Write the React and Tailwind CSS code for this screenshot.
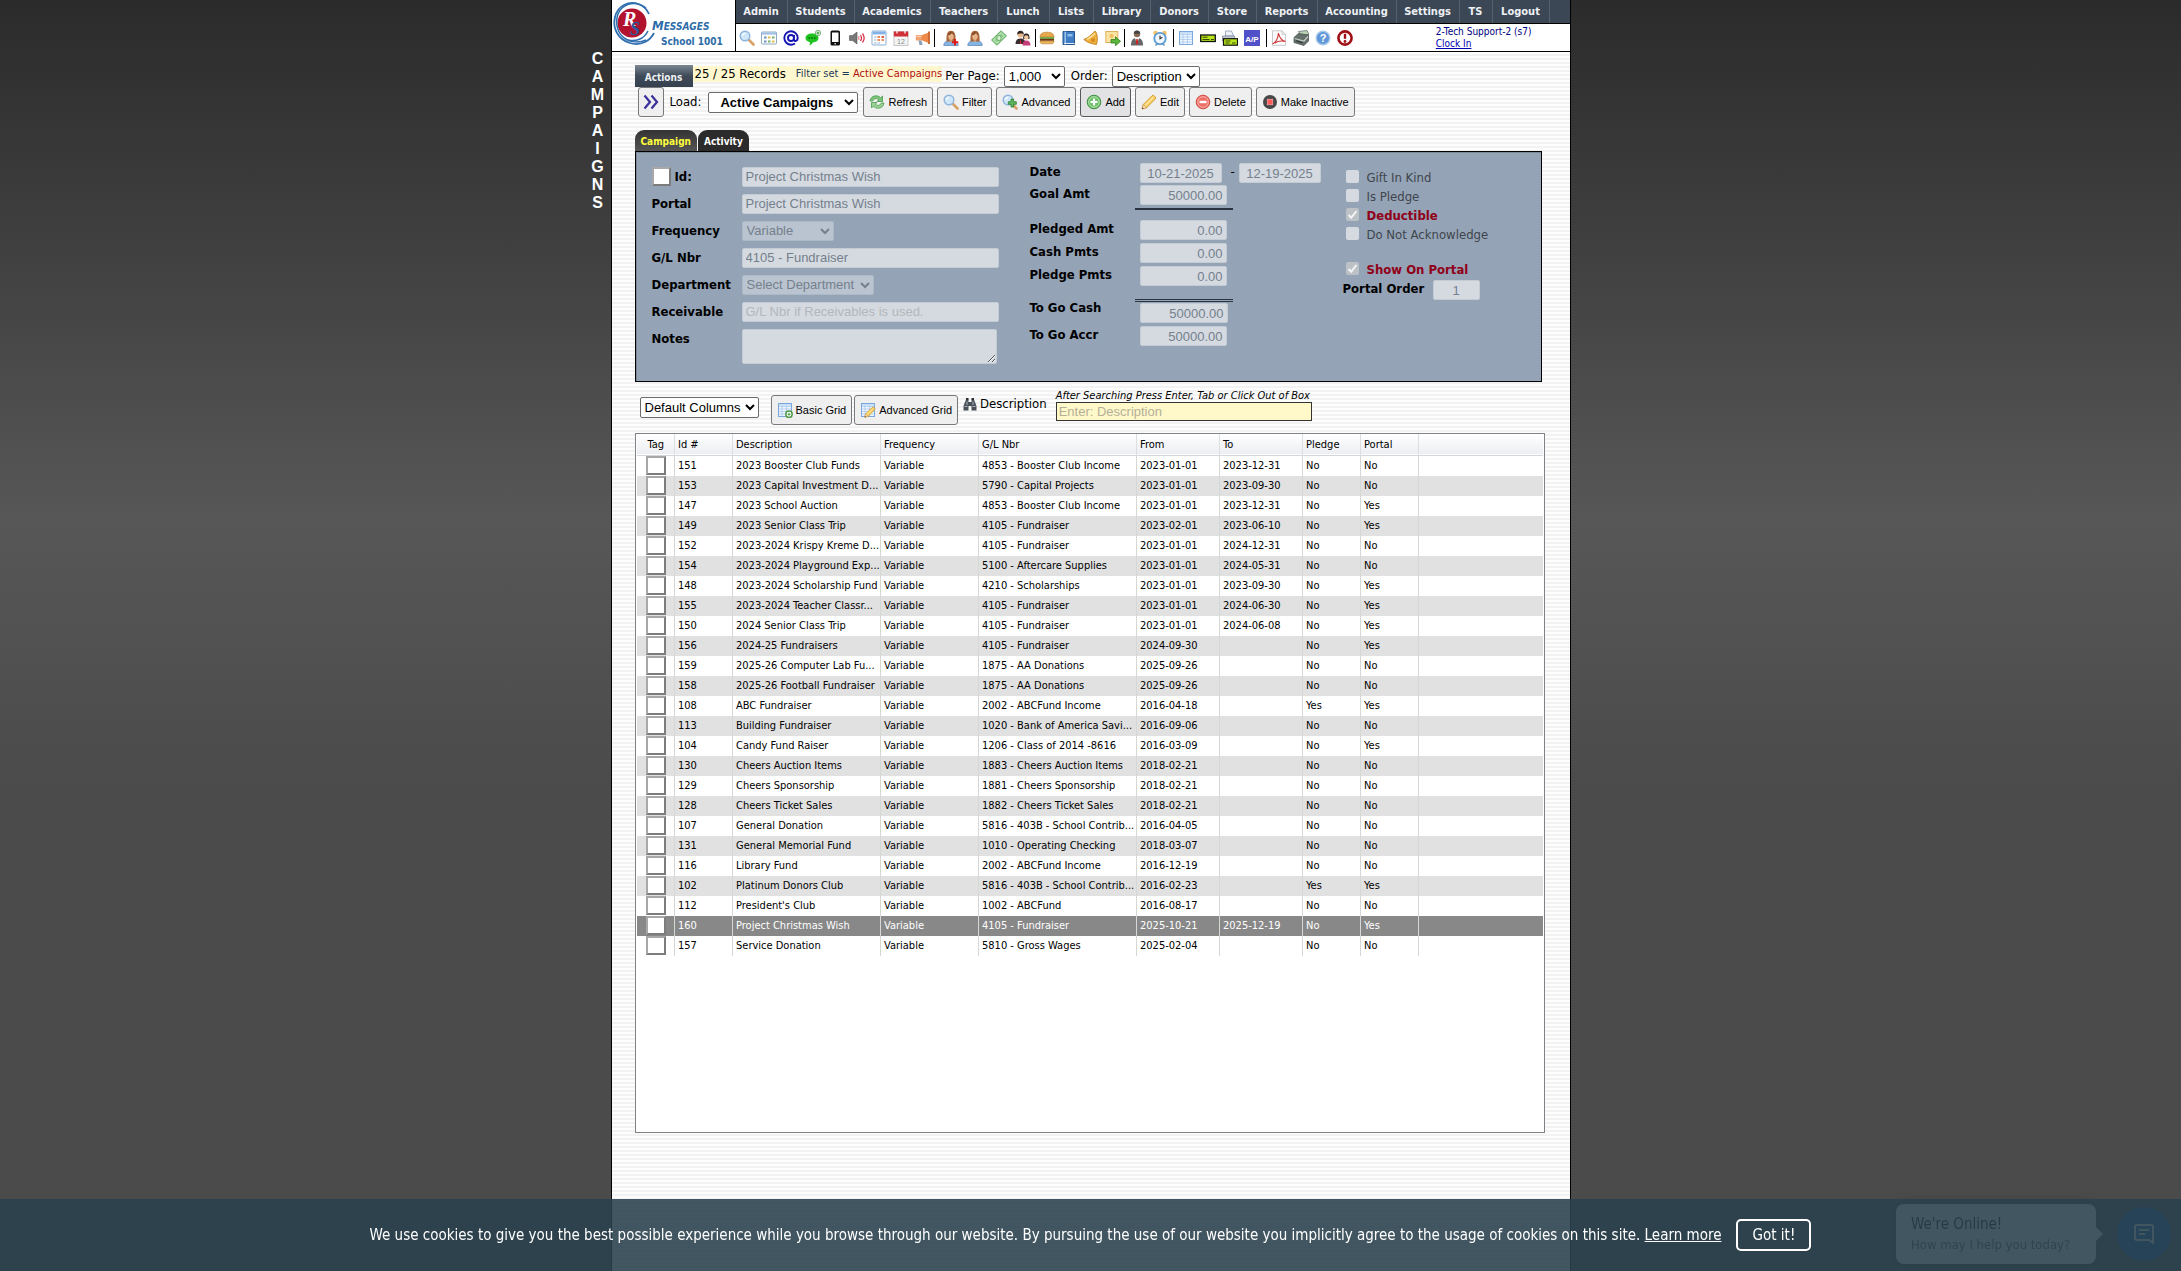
import React, { useState } from 'react';

const menu = [
  { name: 'Admin', width: 'w-[52px]' },
  { name: 'Students', width: 'w-[67px]' },
  { name: 'Academics', width: 'w-[76px]' },
  { name: 'Teachers', width: 'w-[67px]' },
  { name: 'Lunch', width: 'w-[52px]' },
  { name: 'Lists', width: 'w-[44px]' },
  { name: 'Library', width: 'w-[57px]' },
  { name: 'Donors', width: 'w-[58px]' },
  { name: 'Store', width: 'w-[48px]' },
  { name: 'Reports', width: 'w-[61px]' },
  { name: 'Accounting', width: 'w-[79px]' },
  { name: 'Settings', width: 'w-[63px]' },
  { name: 'TS', width: 'w-[33px]' },
  { name: 'Logout', width: 'w-[57px]' },
];

const campaigns = [
  ['151', '2023 Booster Club Funds', '4853 - Booster Club Income', '2023-01-01', '2023-12-31', 'No', 'No'],
  ['153', '2023 Capital Investment D...', '5790 - Capital Projects', '2023-01-01', '2023-09-30', 'No', 'No'],
  ['147', '2023 School Auction', '4853 - Booster Club Income', '2023-01-01', '2023-12-31', 'No', 'Yes'],
  ['149', '2023 Senior Class Trip', '4105 - Fundraiser', '2023-02-01', '2023-06-10', 'No', 'Yes'],
  ['152', '2023-2024 Krispy Kreme D...', '4105 - Fundraiser', '2023-01-01', '2024-12-31', 'No', 'No'],
  ['154', '2023-2024 Playground Exp...', '5100 - Aftercare Supplies', '2023-01-01', '2024-05-31', 'No', 'No'],
  ['148', '2023-2024 Scholarship Fund', '4210 - Scholarships', '2023-01-01', '2023-09-30', 'No', 'Yes'],
  ['155', '2023-2024 Teacher Classr...', '4105 - Fundraiser', '2023-01-01', '2024-06-30', 'No', 'Yes'],
  ['150', '2024 Senior Class Trip', '4105 - Fundraiser', '2023-01-01', '2024-06-08', 'No', 'Yes'],
  ['156', '2024-25 Fundraisers', '4105 - Fundraiser', '2024-09-30', '', 'No', 'Yes'],
  ['159', '2025-26 Computer Lab Fu...', '1875 - AA Donations', '2025-09-26', '', 'No', 'No'],
  ['158', '2025-26 Football Fundraiser', '1875 - AA Donations', '2025-09-26', '', 'No', 'No'],
  ['108', 'ABC Fundraiser', '2002 - ABCFund Income', '2016-04-18', '', 'Yes', 'Yes'],
  ['113', 'Building Fundraiser', '1020 - Bank of America Savi...', '2016-09-06', '', 'No', 'No'],
  ['104', 'Candy Fund Raiser', '1206 - Class of 2014 -8616', '2016-03-09', '', 'No', 'Yes'],
  ['130', 'Cheers Auction Items', '1883 - Cheers Auction Items', '2018-02-21', '', 'No', 'No'],
  ['129', 'Cheers Sponsorship', '1881 - Cheers Sponsorship', '2018-02-21', '', 'No', 'No'],
  ['128', 'Cheers Ticket Sales', '1882 - Cheers Ticket Sales', '2018-02-21', '', 'No', 'No'],
  ['107', 'General Donation', '5816 - 403B - School Contrib...', '2016-04-05', '', 'No', 'No'],
  ['131', 'General Memorial Fund', '1010 - Operating Checking', '2018-03-07', '', 'No', 'No'],
  ['116', 'Library Fund', '2002 - ABCFund Income', '2016-12-19', '', 'No', 'No'],
  ['102', 'Platinum Donors Club', '5816 - 403B - School Contrib...', '2016-02-23', '', 'Yes', 'Yes'],
  ['112', "President's Club", '1002 - ABCFund', '2016-08-17', '', 'No', 'No'],
  ['160', 'Project Christmas Wish', '4105 - Fundraiser', '2025-10-21', '2025-12-19', 'No', 'Yes'],
  ['157', 'Service Donation', '5810 - Gross Wages', '2025-02-04', '', 'No', 'No'],
];

const Svg = ({ children }) => (
  <svg width="16" height="16" viewBox="0 0 16 16" fill="none" className="shrink-0" aria-hidden="true">
    {children}
  </svg>
);

// Shared pieces of the small drawings
const glass = (
  <>
    <path d="M9.5 9.5l5 5" stroke="#d9a066" strokeWidth="2.6" strokeLinecap="round" />
    <circle cx="6" cy="6" r="4.8" fill="#cfe6fa" stroke="#8fb4dc" strokeWidth="1.4" />
    <path d="M3.5 6a2.6 2.6 0 012.6-2.6" stroke="#fff" strokeWidth="1.2" />
  </>
);

const sheet = (
  <>
    <rect x="1.5" y="1.5" width="13" height="13" fill="#eef6ff" stroke="#7aa7dc" />
    <path d="M2 4.5h12M2 7h12M2 9.5h12M2 12h12M5 2v12M9.5 2v12" stroke="#a9c9ec" strokeWidth=".8" />
    <path d="M2 2.8h12" stroke="#c4dcf6" strokeWidth="1.6" />
  </>
);

const pencil = (
  <>
    <path d="M1 15l1.3-4.6L11 1.7a1.4 1.4 0 012 0l1.3 1.3a1.4 1.4 0 010 2L5.6 13.7z" fill="#f8cf5c" stroke="#c98f2a" strokeWidth=".8" />
    <path d="M3.8 11.8l8.4-8.4" stroke="#fdebb0" strokeWidth="1.2" />
    <path d="M1 15l1.3-4.6 3.3 3.3z" fill="#f6dfc0" stroke="#c98f2a" strokeWidth=".6" />
    <path d="M1 15l.5-1.8 1.3 1.3z" fill="#444" />
  </>
);

const lady = (
  <>
    <path d="M.8 15.500c0-3.400 2.400-5 7.200-5s7.200 1.600 7.200 5z" fill="#86b4e0" stroke="#5580b8" strokeWidth=".7" />
    <path d="M3.500 11.500C3 4 4.500.8 8 .8S13 4 12.500 11.500z" fill="#a9673a" />
    <ellipse cx="8" cy="6.500" rx="2.700" ry="3.400" fill="#e8b48a" />
    <path d="M5.200 5.200C7 5 8.500 4 9 3c.5 1 1.200 1.800 2 2.200V3.500L8 1.500 5 3.500z" fill="#8a4e28" />
    <path d="M6.500 10.500L8 12l1.500-1.500z" fill="#f1c29a" />
  </>
);

const icons = {
  search: glass,
  grid: (
    <>
      <rect x=".5" y="2" width="15" height="12" rx="1" fill="#fff" stroke="#8ea9c4" />
      <path d="M1 3.500h14" stroke="#9fc0e4" strokeWidth="2.200" />
      <path d="M3 6.500h2.500v2H3zM3 10.500h2.500v2H3z" fill="#6c93bd" />
      <path d="M7 6.500h2.500v2H7zM11 10.500h2.500v2H11z" fill="#e1c14a" />
      <path d="M11 6.500h2.500v2H11zM7 10.500h2.500v2H7z" fill="#7db074" />
    </>
  ),
  at: (
    <path d="M11 5v4.200c0 2.700 3.700 2.300 3.700-1.500A6.700 6.700 0 108 14.700c1.600 0 2.800-.4 4-1.200M11 8a3 3 0 11-6 0 3 3 0 016 0z" stroke="#1414b4" strokeWidth="1.900" />
  ),
  chat: (
    <>
      <path d="M7 3.500c3.800 0 6.500 1.900 6.500 4.500S10.800 12.400 7.800 12.400c-.5 1.400-2 2.600-3.600 2.800.7-.9.8-2 .6-3C2.400 11.600.5 10.200.5 8 .5 5.400 3.200 3.500 7 3.500z" fill="#1fc21f" />
      <path d="M3.500 8h1.600M6.300 8h1.600M9 8h1.600" stroke="#0b6a0b" strokeWidth="1.600" />
      <circle cx="13" cy="3" r="2.700" fill="#f0fff0" stroke="#4c9a4c" strokeWidth=".7" />
      <path d="M13 1.500v3M11.500 3h3" stroke="#2a8a2a" />
    </>
  ),
  phone: (
    <>
      <rect x="3.500" y=".5" width="9.500" height="15" rx="1.600" fill="#111" />
      <rect x="5" y="2.500" width="6.500" height="9.500" fill="#fff" />
      <circle cx="8.200" cy="13.800" r=".8" fill="#fff" />
    </>
  ),
  sound: (
    <>
      <path d="M.5 5.500h3L8 2v12l-4.500-3.500h-3z" fill="#777" stroke="#555" strokeWidth=".6" />
      <path d="M9.800 6v4" stroke="#e88" strokeWidth="1.200" />
      <path d="M11.500 5c1.200 1.800 1.200 4.200 0 6M13.500 3.500c2 2.700 2 6.300 0 9" stroke="#d8344a" strokeWidth="1.300" />
    </>
  ),
  sheetCal: (
    <>
      <rect x="1" y="1" width="14" height="14" rx="1" fill="#fff" stroke="#88add6" />
      <path d="M1.500 3h13" stroke="#84b0e6" strokeWidth="2.800" />
      <path d="M3 6h2.500v2H3zM3 9h2.500v2H3zM3 12h2.500v2H3zM6.500 12H9v2H6.500z" fill="#c9d8e8" />
      <path d="M6.500 6H9v2H6.500zM6.500 9H9v2H6.500zM10.500 9H13v2h-2.500z" fill="#e98a5a" />
      <path d="M10.500 6H13v2h-2.500z" fill="#d9603a" />
    </>
  ),
  calendar: (
    <>
      <rect x="1" y="1.500" width="14" height="14" fill="#f4f4f4" stroke="#bbb" strokeWidth=".8" />
      <path d="M.8 1.500h14.400v5H.8z" fill="#cf2f36" />
      <path d="M4 .5v3M12 .5v3" stroke="#fff" strokeWidth="1.200" />
      <text x="8" y="13.500" fontSize="7" textAnchor="middle" fill="#888" fontFamily="Liberation Sans, sans-serif">12</text>
    </>
  ),
  horn: (
    <>
      <path d="M13.500 2.500v10.500L6 10V5.500z" fill="#f08a48" />
      <path d="M14 1.500v12.500" stroke="#c8602a" strokeWidth="1.800" />
      <path d="M.8 5h5.700v5.500H.8z" fill="#f5a070" />
      <path d="M1.500 6.500h5" stroke="#fbd0b4" strokeWidth="1.200" />
      <path d="M3.500 10.500h3l1.200 4.500H4.500z" fill="#8aa0bb" />
    </>
  ),
  ladyAdd: (
    <>
      {lady}
      <path d="M12 9v6.500M8.800 12.200h6.500" stroke="#e01818" strokeWidth="2" />
    </>
  ),
  lady,
  money: (
    <>
      <path d="M.5 10L10 .8l5.500 5L6 15.200z" fill="#8fce8b" stroke="#4e9a52" strokeWidth=".8" />
      <path d="M2.500 10L10 2.800l3.500 3L6 13z" stroke="#d8f2d2" strokeWidth=".8" />
      <ellipse cx="8" cy="8" rx="2.200" ry="2.600" fill="#d6f0cf" stroke="#4e9a52" strokeWidth=".7" />
    </>
  ),
  people: (
    <>
      <circle cx="5.500" cy="4.500" r="3" fill="#e9b78c" />
      <path d="M2.300 4.800C2 1.500 4 .8 5.500.8S9 1.500 8.700 4.800C8 3 3.500 3 2.300 4.800z" fill="#2c2020" />
      <path d="M.5 14c0-4 2-5.500 5-5.500s5 1.500 5 5.500z" fill="#3a2c34" />
      <path d="M5.500 8.500L4.800 14h1.600z" fill="#d22" />
      <path d="M8.200 9C8 4.500 9.500 3.500 11.300 3.500S14.700 4.500 14.500 9z" fill="#2c2020" />
      <circle cx="11.300" cy="7.500" r="2.300" fill="#f1c8a0" />
      <path d="M7.500 15.500c0-3.500 1.500-5 3.900-5s4.100 1.500 4.100 5z" fill="#c63b78" />
    </>
  ),
  burger: (
    <>
      <path d="M1 7c0-3.500 3-4.800 7-4.800S15 3.500 15 7z" fill="#e6a94c" stroke="#b9772a" strokeWidth=".6" />
      <path d="M.8 8h14.400" stroke="#5aa02c" strokeWidth="1.600" />
      <path d="M1 9.800h14" stroke="#6a3515" strokeWidth="2" />
      <path d="M1 11h14c0 2-1 2.800-3 2.800H4c-2 0-3-.8-3-2.800z" fill="#eab65e" stroke="#b9772a" strokeWidth=".6" />
    </>
  ),
  book: (
    <>
      <path d="M2 1.500h11.500v13H2z" fill="#3f7ec4" stroke="#24558f" />
      <path d="M4.200 1.500v13" stroke="#b7d3f2" strokeWidth="1.200" />
      <path d="M6.500 4h5v2.500h-5z" fill="#8fbdec" />
      <path d="M3 13.500h10.500" stroke="#e4eef9" />
    </>
  ),
  bell: (
    <>
      <path d="M.8 9.500C5 8 8 5 12 1c2.500 2 3 9 1.500 13.500C9 14 4 12.500.8 9.500z" fill="#f0b13a" stroke="#b9791c" strokeWidth=".8" />
      <path d="M4 9.200C7 8 9.500 6 12 3.500" stroke="#fbe09a" strokeWidth="1.600" />
      <circle cx="10" cy="10" r="2" fill="#d68a26" />
    </>
  ),
  forward: (
    <>
      <rect x=".8" y="1.500" width="12" height="11" fill="#fbe3a2" stroke="#dcb25c" />
      <circle cx="6.500" cy="6" r="2" fill="#f0bd62" />
      <path d="M6 9.500h4.500V6.800l5 4.500-5 4.500V13H6z" fill="#5cb53c" stroke="#2f7d1c" strokeWidth=".8" />
    </>
  ),
  man: (
    <>
      <path d="M2 15.500c0-5 1.500-7.500 6-7.500s6 2.500 6 7.500z" fill="#666" />
      <path d="M6 8h4l-2 6z" fill="#fff" />
      <path d="M7.300 9h1.400l.5 4L8 15l-1.200-2z" fill="#d22020" />
      <circle cx="8" cy="4" r="3.200" fill="#8a6a58" />
      <path d="M4.800 3.800C4.800 1.500 6 .5 8 .5s3.200 1 3.200 3.300z" fill="#444" />
    </>
  ),
  clock: (
    <>
      <circle cx="3.500" cy="3" r="2.200" fill="#f2c062" />
      <circle cx="12.500" cy="3" r="2.200" fill="#f2c062" />
      <path d="M3.500 15.500l2-2M12.500 15.500l-2-2" stroke="#7a93b0" strokeWidth="1.600" />
      <circle cx="8" cy="8.500" r="5.700" fill="#f0f7ff" stroke="#5d9ad6" strokeWidth="1.800" />
      <path d="M8 5.500v3.200l2.400-1.500" stroke="#333" strokeWidth="1.100" />
    </>
  ),
  sheet,
  check: (
    <>
      <rect x=".7" y="5" width="14.600" height="6.500" fill="#b8e61c" stroke="#111" strokeWidth="1.300" />
      <path d="M2.500 7.200h5M2.500 9.500h7M11 9.500h3" stroke="#3b4a08" />
    </>
  ),
  checkPrint: (
    <>
      <path d="M3.500 1h6l2 5h-8z" fill="#eef3fa" stroke="#8b9bb5" strokeWidth=".8" />
      <path d="M.5 6h12v5H.5z" fill="#c3cad6" stroke="#7f8ba0" strokeWidth=".8" />
      <rect x="1.500" y="8.700" width="14" height="6.500" fill="#b8e61c" stroke="#111" strokeWidth="1.200" />
      <path d="M3.500 11h5M3.500 13h4M10 13h3.500" stroke="#3b4a08" />
    </>
  ),
  ap: (
    <>
      <rect width="16" height="16" fill="#5050c8" />
      <text x="8" y="11.500" fontSize="8" fontWeight="bold" textAnchor="middle" fill="#fff" fontFamily="Liberation Sans, sans-serif">A/P</text>
    </>
  ),
  pdf: (
    <>
      <path d="M1.500.8h9.500l3.500 3.500v11h-13z" fill="#fdfdfd" stroke="#bbb" strokeWidth=".8" />
      <path d="M11 .8v3.500h3.500" stroke="#bbb" strokeWidth=".8" />
      <path d="M1.500 14c3-1.500 5.500-5.500 6-11 .8 4.500 2.700 7.500 7 8.500-3.500-.8-8-.5-10.500 1.500" stroke="#cf3a3a" strokeWidth="1.200" />
    </>
  ),
  register: (
    <>
      <path d="M5.500 1.500l8.500-1 2 4-8 1.500z" fill="#bcd4b4" stroke="#566" strokeWidth=".7" />
      <path d="M1 7.500l4.500-4L15.500 5v6l-4.500 4.500L1 12.500z" fill="#66706b" stroke="#3d4643" strokeWidth=".7" />
      <path d="M1.500 8.500l9.500 2.500 4-4.500" stroke="#c4ccc6" strokeWidth="1.200" />
      <path d="M3 10.800l6.500 2" stroke="#2c3330" strokeWidth="1.200" />
    </>
  ),
  help: (
    <>
      <circle cx="8" cy="8" r="6.800" fill="#5f97d8" stroke="#a9c8ec" strokeWidth="1.400" />
      <text x="8" y="12" fontSize="11" fontWeight="bold" textAnchor="middle" fill="#fff" fontFamily="Liberation Sans, sans-serif">?</text>
    </>
  ),
  alert: (
    <>
      <circle cx="8" cy="8" r="6.600" fill="#fff" stroke="#a01016" strokeWidth="2.600" />
      <path d="M8 3.800v5" stroke="#a01016" strokeWidth="2.400" />
      <circle cx="8" cy="11.500" r="1.400" fill="#a01016" />
    </>
  ),
  refresh: (
    <>
      <path d="M1 7C1.500 3.500 4 1.800 7 1.800c2 0 3.500.7 4.700 2L13.500 2v5.500H8L9.800 5.700C8 4 4.500 4.200 3.800 7z" fill="#7cc47a" stroke="#479a4c" strokeWidth=".8" />
      <path d="M15 9c-.5 3.500-3 5.200-6 5.200-2 0-3.500-.7-4.700-2L2.500 14V8.500H8l-1.800 1.800c1.800 1.700 5.300 1.500 6-1.300z" fill="#9bd596" stroke="#479a4c" strokeWidth=".8" />
    </>
  ),
  advanced: (
    <>
      {glass}
      <path d="M9 5h2.600v2.700h2.700v2.600h-2.700V13H9v-2.700H6.300V7.700H9z" fill="#5cb85c" stroke="#2e7d32" strokeWidth=".8" />
    </>
  ),
  add: (
    <>
      <circle cx="8" cy="8" r="6.800" fill="#6fbf68" stroke="#3f8f42" />
      <circle cx="8" cy="8" r="5.300" stroke="#b9e4b2" />
      <path d="M8 4.500v7M4.500 8h7" stroke="#fff" strokeWidth="2.200" />
    </>
  ),
  edit: pencil,
  remove: (
    <>
      <circle cx="8" cy="8" r="6.800" fill="#ee6f66" stroke="#cf4a42" />
      <circle cx="8" cy="8" r="5.300" stroke="#f8b3ac" />
      <path d="M4.500 8h7" stroke="#fff" strokeWidth="2.400" />
    </>
  ),
  inactive: (
    <>
      <circle cx="8" cy="8" r="7" fill="#474747" />
      <rect x="5.200" y="5.200" width="5.600" height="5.600" fill="#ff5a5a" stroke="#ffb3b3" strokeWidth=".6" />
    </>
  ),
  basicGrid: (
    <>
      {sheet}
      <circle cx="12" cy="12.300" r="3.200" fill="#fff" stroke="#4f9a45" strokeWidth="1.500" />
      <path d="M12 10.800v3M10.500 12.300h3" stroke="#4f9a45" />
    </>
  ),
  advancedGrid: (
    <>
      {sheet}
      <g transform="translate(4 4) scale(.75)">{pencil}</g>
    </>
  ),
  chevrons: <path d="M1.500 1.500L7 8l-5.500 6.500M8.500 1.500L14 8l-5.500 6.500" stroke="#3a2f9a" strokeWidth="2.200" />,
  binoculars: (
    <>
      <path d="M4 3.500h2.500v2.500h3V3.500H12l2.500 6.500v4.500h-5V10h-3v4.500h-5V10z" fill="#4a5058" />
      <path d="M4 2h2.500v2H4zM9.500 2H12v2H9.500z" fill="#2c3036" />
      <path d="M2.500 10.500h3M10.500 10.500h3M5 5.500v3.500M11 5.500v3.500" stroke="#aab4c0" />
    </>
  ),
};

const toolGroups = [
  { slot: 'w-[22px]', box: '', names: ['search', 'grid', 'at', 'chat', 'phone', 'sound', 'sheetCal', 'calendar', 'horn'] },
  { slot: 'w-[24px]', box: 'pl-1', names: ['ladyAdd', 'lady', 'money', 'people'] },
  { slot: 'w-[22px]', box: '', names: ['burger', 'book', 'bell', 'forward'] },
  { slot: 'w-[23px]', box: 'px-px', names: ['man', 'clock'] },
  { slot: 'w-[22px]', box: 'pl-px pr-[3px]', names: ['sheet', 'check', 'checkPrint', 'ap'] },
  { slot: 'w-[22px]', box: 'pl-px', names: ['pdf', 'register', 'help', 'alert'] },
];

const ToolButton = ({ icon, children, active }) => (
  <button
    type="button"
    className={`flex h-[30px] items-center gap-[3px] rounded-[3px] border px-[5px] font-['Liberation_Sans',sans-serif] text-[11px] whitespace-nowrap text-black ${
      active ? 'border-[#55585c] bg-[#e2e2e4]' : 'border-[#77797c] bg-[#efefef]'
    }`}
  >
    <Svg>{icons[icon]}</Svg>
    {children}
  </button>
);

const field =
  "h-[20px] rounded-[2px] border border-[#c3cbd5] bg-[#d5dae1] px-[3px] font-['Liberation_Sans',sans-serif] text-[13px] text-[#74808c]";
const dropDown =
  "h-[21px] rounded-[2px] border border-[#6b6b6b] bg-white font-['Liberation_Sans',sans-serif] text-[13px] text-black";
const mutedDropDown =
  "h-[20px] rounded-[2px] border border-[#aeb9c6] bg-[#bac4d0] font-['Liberation_Sans',sans-serif] text-[13px] text-[#74808c]";
const tagBox =
  'block appearance-none border-2 border-t-[#a8a8a8] border-l-[#a8a8a8] border-r-[#7c7c7c] border-b-[#7c7c7c] bg-white';

const Logo = () => (
  <a href="#home" className="flex h-[51px] w-[124px] shrink-0 border-r border-black bg-white">
    <svg width="123" height="51" viewBox="0 0 123 51" fill="none" role="img" aria-label="RS Messages School 1001">
      <circle cx="20" cy="23" r="14.500" fill="#b3122f" />
      <path d="M37 14C33 5 22 0 12 5 2 10 0 24 5 33c5 9 18 14 28 9 4-2 7-5 9-9" stroke="#2f6fb0" strokeWidth="1.800" />
      <path d="M34 8C27 2 17 2 10 8 3 15 3 27 9 35c6 7 17 9 25 5" stroke="#2f6fb0" strokeWidth="1.500" />
      <path d="M36 31c-4 8-12 11-20 9" stroke="#2f6fb0" strokeWidth="1.600" />
      <text x="11" y="26" fontSize="20" fontWeight="bold" fontStyle="italic" fill="#fff" fontFamily="Liberation Serif, serif">
        R<tspan x="18" y="35" fontSize="18" fill="#2a5a9c">S</tspan>
      </text>
      <text x="40" y="30" fontWeight="bold" fontStyle="italic" fill="#2d6ca8" fontFamily="DejaVu Sans Condensed, sans-serif">
        <tspan fontSize="13">M</tspan>
        <tspan fontSize="10">ESSAGES</tspan>
      </text>
      <text x="49" y="45" fontSize="10" fontWeight="bold" fill="#2d6ca8" fontFamily="DejaVu Sans Condensed, sans-serif">School 1001</text>
    </svg>
  </a>
);

const Header = () => (
  <header className="flex border-b border-black bg-white">
    <Logo />
    <div className="min-w-0 flex-1">
      <nav className="flex h-6 border-b border-black bg-[#3b4754]">
        {menu.map((item) => (
          <a
            key={item.name}
            href={`#${item.name.toLowerCase()}`}
            className={`flex ${item.width} items-center justify-center border-r border-[#55616d] pt-[2px] text-[11px] font-bold text-[#eef1f4]`}
          >
            {item.name}
          </a>
        ))}
      </nav>
      <div className="flex h-[27px] items-center">
        {toolGroups.map((group, index) => (
          <div key={index} className="flex items-center">
            {index > 0 && <span className="h-[18px] w-px bg-black" />}
            <div className={`flex ${group.box}`}>
              {group.names.map((name) => (
                <button key={name} type="button" aria-label={name} className={`flex ${group.slot} justify-center`}>
                  <Svg>{icons[name]}</Svg>
                </button>
              ))}
            </div>
          </div>
        ))}
        <div className="mr-[38px] ml-auto pt-px text-[10px] leading-3 text-[#000080]">
          <p>2-Tech Support-2 (s7)</p>
          <a href="#clock" className="text-[#0000b0] underline">Clock In</a>
        </div>
      </div>
    </div>
  </header>
);

const Toolbar = () => (
  <section>
    <div className="flex h-[22px] items-center text-[13px]">
      <button type="button" className="h-[22px] w-[58px] bg-linear-to-b from-[#7d8894] via-[#3f4b58] to-[#35414e] pt-[2px] text-[10px] font-bold text-[#eef1f4]">
        Actions
      </button>
      <p className="mb-1 flex h-4 items-center bg-[#fff8cf] pl-[2px] whitespace-nowrap">
        25 / 25 Records
        <span className="ml-[10px] text-[11px] text-[#1d3c58]">
          Filter set = <span className="text-[#b01010]">Active Campaigns</span>
        </span>
      </p>
      <label htmlFor="perPage" className="ml-[3px]">Per Page:</label>
      <select id="perPage" className={`${dropDown} ml-1 w-[61px]`}>
        <option>1,000</option>
      </select>
      <label htmlFor="order" className="ml-[6px]">Order:</label>
      <select id="order" className={`${dropDown} ml-1 w-[88px]`}>
        <option>Description</option>
      </select>
    </div>
    <div className="flex items-center gap-1 pl-[3px] text-[13px]">
      <button type="button" aria-label="Expand" className="flex h-[30px] w-[26px] items-center justify-center rounded-[3px] border border-[#77797c] bg-[#efefef]">
        <Svg>{icons.chevrons}</Svg>
      </button>
      <label htmlFor="load" className="ml-[2px]">Load:</label>
      <select
        id="load"
        className="mr-px ml-[3px] h-[21px] w-[150px] rounded-[2px] border border-[#6b6b6b] bg-white pl-[7px] font-['Liberation_Sans',sans-serif] text-[13px] font-bold text-black"
      >
        <option>Active Campaigns</option>
      </select>
      <ToolButton icon="refresh">Refresh</ToolButton>
      <ToolButton icon="search">Filter</ToolButton>
      <ToolButton icon="advanced">Advanced</ToolButton>
      <ToolButton icon="add" active>Add</ToolButton>
      <ToolButton icon="edit">Edit</ToolButton>
      <ToolButton icon="remove">Delete</ToolButton>
      <ToolButton icon="inactive">Make Inactive</ToolButton>
    </div>
  </section>
);

const Amount = ({ id, label, value }) => (
  <div className="flex h-[23px] items-start">
    <label htmlFor={id} className="w-[110px] font-bold">{label}</label>
    <input id={id} disabled defaultValue={value} className={`${field} w-[87px] text-right`} />
  </div>
);

const Flag = ({ id, label, checked }) => (
  <div className="flex h-[19px] items-center gap-2 pl-[3px]">
    <input
      id={id}
      type="checkbox"
      disabled
      defaultChecked={checked}
      className="peer sr-only"
    />
    <span className="flex size-[13px] items-center justify-center rounded-[2px] bg-[#d5dae1] peer-checked:bg-[#bcc1c6]">
      {checked && (
        <svg width="11" height="11" viewBox="0 0 11 11" fill="none" aria-hidden="true">
          <path d="M1.500 6l2.700 2.700L9.500 2" stroke="#f4f4f4" strokeWidth="2" />
        </svg>
      )}
    </span>
    <label htmlFor={id} className={checked ? 'pt-[2px] font-bold text-[#900018]' : 'pt-[2px] text-[#3f454c]'}>{label}</label>
  </div>
);

const CampaignForm = () => (
  <section className="mr-[3px] flex h-[231px] border border-black bg-[#94a3b6] pt-[11px] pl-4 text-[13px] leading-[18px] shadow-[inset_1px_1px_0_#7d8997]">
    <div className="grid w-[378px] grid-cols-[90px_1fr] auto-rows-[27px] content-start items-center">
      <div className="flex items-center gap-1">
        <input id="tagCurrent" type="checkbox" aria-label="Tag campaign" className={`${tagBox} size-[19px]`} />
        <label htmlFor="campaignId" className="font-bold">Id:</label>
      </div>
      <input id="campaignId" disabled defaultValue="Project Christmas Wish" className={`${field} w-[257px]`} />
      <label htmlFor="portal" className="font-bold">Portal</label>
      <input id="portal" disabled defaultValue="Project Christmas Wish" className={`${field} w-[257px]`} />
      <label htmlFor="frequency" className="font-bold">Frequency</label>
      <select id="frequency" disabled className={`${mutedDropDown} w-[92px]`}>
        <option>Variable</option>
      </select>
      <label htmlFor="glNbr" className="font-bold">G/L Nbr</label>
      <input id="glNbr" disabled defaultValue="4105 - Fundraiser" className={`${field} w-[257px]`} />
      <label htmlFor="department" className="font-bold">Department</label>
      <select id="department" disabled className={`${mutedDropDown} w-[132px]`}>
        <option>Select Department</option>
      </select>
      <label htmlFor="receivable" className="font-bold">Receivable</label>
      <input
        id="receivable"
        disabled
        placeholder="G/L Nbr if Receivables is used."
        className={`${field} w-[257px] placeholder:text-[#b3b6ba]`}
      />
      <label htmlFor="notes" className="font-bold">Notes</label>
      <textarea id="notes" disabled className="mt-1 h-[35px] w-[255px] resize self-start rounded-[2px] border border-[#c3cbd5] bg-[#d5dae1]" />
    </div>

    <div className="w-[313px]">
      <div className="flex h-[22px] items-start">
        <label htmlFor="dateFrom" className="w-[110px] font-bold">Date</label>
        <input id="dateFrom" disabled defaultValue="10-21-2025" className={`${field} w-[82px] text-center`} />
        <span className="w-[17px] pl-[5px] text-center">-</span>
        <input aria-label="Date to" disabled defaultValue="12-19-2025" className={`${field} w-[82px] text-center`} />
      </div>
      <Amount id="goal" label="Goal Amt" value="50000.00" />
      <div className="ml-[105px] h-[2px] w-[98px] bg-[#2a3340]" />
      <div className="pt-[10px]">
        <Amount id="pledged" label="Pledged Amt" value="0.00" />
        <Amount id="cashPmts" label="Cash Pmts" value="0.00" />
        <Amount id="pledgePmts" label="Pledge Pmts" value="0.00" />
      </div>
      <div className="flex h-[27px] items-start pt-[10px] pb-[27px]">
        <label htmlFor="toGoCash" className="w-[105px] font-bold">To Go Cash</label>
        <div className="w-[98px] border-t-[3px] border-double border-[#2a3340] px-[5px] pt-px">
          <input id="toGoCash" disabled defaultValue="50000.00" className={`${field} block w-full text-right`} />
        </div>
      </div>
      <Amount id="toGoAccr" label="To Go Accr" value="50000.00" />
    </div>

    <div className="pt-1">
      <Flag id="gift" label="Gift In Kind" />
      <Flag id="isPledge" label="Is Pledge" />
      <Flag id="deductible" label="Deductible" checked />
      <Flag id="noAck" label="Do Not Acknowledge" />
      <div className="pt-4">
        <Flag id="showOnPortal" label="Show On Portal" checked />
      </div>
      <div className="flex items-start pt-[2px]">
        <label htmlFor="portalOrder" className="w-[90px] font-bold">Portal Order</label>
        <input id="portalOrder" disabled defaultValue="1" className={`${field} w-[47px] text-center`} />
      </div>
    </div>
  </section>
);

const GridTools = () => (
  <section className="flex h-[30px] items-start pl-[5px]">
    <select aria-label="Columns" className={`${dropDown} mt-[2px] mr-3 w-[119px]`}>
      <option>Default Columns</option>
    </select>
    <div className="flex gap-[2px]">
      <ToolButton icon="basicGrid">Basic Grid</ToolButton>
      <ToolButton icon="advancedGrid">Advanced Grid</ToolButton>
    </div>
    <label htmlFor="search" className="ml-1 flex items-center gap-[2px] text-[13px] leading-[18px]">
      <Svg>{icons.binoculars}</Svg>
      Description
    </label>
    <div className="-mt-[6px] ml-[9px] w-[256px]">
      <p className="text-[11px] leading-[13px] whitespace-nowrap italic">After Searching Press Enter, Tab or Click Out of Box</p>
      <input
        id="search"
        placeholder="Enter: Description"
        className="block h-[19px] w-full border border-[#333] bg-[#fff8c8] px-[2px] font-['Liberation_Sans',sans-serif] text-[13px] placeholder:text-[#b4b09a]"
      />
    </div>
  </section>
);

const CampaignTable = ({ selected, onSelect }) => (
  <section className="h-[700px] border border-[#7f8388] bg-white px-px">
    <table className="w-full table-fixed border-collapse text-left text-[11px]">
      <thead>
        <tr className="h-[21px] border-b border-[#d4d6da] bg-linear-to-b from-white to-[#eceef2]">
          <th className="w-[38px] pt-[2px] pl-px text-center font-normal">Tag</th>
          <th className="w-[58px] border-l border-[#dcdee0] pt-[2px] pl-[3px] font-normal">Id #</th>
          <th className="w-[148px] border-l border-[#dcdee0] pt-[2px] pl-[3px] font-normal">Description</th>
          <th className="w-[98px] border-l border-[#dcdee0] pt-[2px] pl-[3px] font-normal">Frequency</th>
          <th className="w-[158px] border-l border-[#dcdee0] pt-[2px] pl-[3px] font-normal">G/L Nbr</th>
          <th className="w-[83px] border-l border-[#dcdee0] pt-[2px] pl-[3px] font-normal">From</th>
          <th className="w-[83px] border-l border-[#dcdee0] pt-[2px] pl-[3px] font-normal">To</th>
          <th className="w-[58px] border-l border-[#dcdee0] pt-[2px] pl-[3px] font-normal">Pledge</th>
          <th className="w-[58px] border-l border-[#dcdee0] pt-[2px] pl-[3px] font-normal">Portal</th>
          <th className="border-l border-[#dcdee0]" />
        </tr>
      </thead>
      <tbody>
        {campaigns.map(([id, description, ...rest]) => (
          <tr
            key={id}
            onClick={() => onSelect(id)}
            className={`h-5 ${id === selected ? 'bg-[#888]! text-white' : ''} even:bg-[#e1e1e1]`}
          >
            <td className="p-0 pl-[9px]">
              <input type="checkbox" aria-label={`Tag ${id}`} className={`${tagBox} h-[19px] w-[20px]`} />
            </td>
            {[id, description, 'Variable', ...rest].map((value, index) => (
              <td key={index} className="border-l border-[#d6d8d6] p-0 pl-[3px] leading-5 whitespace-nowrap">
                {value}
              </td>
            ))}
            <td className="border-l border-[#d6d8d6] p-0" />
          </tr>
        ))}
      </tbody>
    </table>
  </section>
);

const ChatBubble = () => (
  <div className="fixed right-[10px] bottom-[7px] flex items-center">
    <div className="h-[60px] w-[200px] rounded-lg bg-white pt-2 pl-[15px] shadow-[0_0_12px_rgba(0,0,0,0.3)]">
      <p className="text-[15px] leading-6 text-black">We're Online!</p>
      <p className="text-[13px] leading-[18px] text-[#555]">How may I help you today?</p>
    </div>
    <span className="border-y-[7px] border-l-[7px] border-y-transparent border-l-white" />
    <button type="button" aria-label="Open chat" className="ml-[14px] flex size-[54px] items-center justify-center rounded-full bg-[#0a50a0]">
      <svg width="24" height="24" viewBox="0 0 24 24" fill="none" stroke="#fff" strokeWidth="2" aria-hidden="true">
        <path d="M5 3h14a2 2 0 012 2v16l-4-3H5a2 2 0 01-2-2V5a2 2 0 012-2zM7 8h10M7 12h6" />
      </svg>
    </button>
  </div>
);

const CookieBar = ({ onClose }) => (
  <div className="fixed inset-x-0 bottom-0 flex h-[72px] items-center justify-center bg-[rgba(43,65,78,0.89)] text-[15px] whitespace-nowrap text-white">
    <p>
      We use cookies to give you the best possible experience while you browse through our website. By pursuing the use of our website you implicitly agree to the usage of cookies on this site.{' '}
      <a href="#cookies" className="underline">Learn more</a>
    </p>
    <button type="button" onClick={onClose} className="ml-[15px] h-8 w-[75px] rounded-[5px] border-2 border-white">
      Got it!
    </button>
  </div>
);

const App = () => {
  const [selected, setSelected] = useState('160');
  const [tab, setTab] = useState('Campaign');
  const [showCookies, setShowCookies] = useState(true);

  return (
    <div className="grid min-h-screen grid-cols-[1fr_minmax(0,960px)_1fr] bg-[linear-gradient(#2b2b2b_0,#575757_519px,#4b4b4b_780px)] font-['DejaVu_Sans_Condensed','Noto_Sans',sans-serif] text-black">
      <aside className="flex justify-end pt-[50px] pr-[5px]">
        <h1 className="flex w-4 flex-col items-center font-['Liberation_Sans',sans-serif] text-[16px] leading-[18px] font-bold text-white">
          {'CAMPAIGNS'.split('').map((letter, index) => (
            <span key={index}>{letter}</span>
          ))}
        </h1>
      </aside>
      <div className="border-x border-black bg-[repeating-linear-gradient(#fdfdfd_0_2px,#f2f2f2_2px_4px)]">
        <Header />
        <main className="pt-[13px] pr-[25px] pl-[23px]">
          <Toolbar />
          <div className="mt-[13px] flex gap-px">
            {['Campaign', 'Activity'].map((name) => (
              <button
                key={name}
                type="button"
                onClick={() => setTab(name)}
                className={`h-[21px] rounded-t-[9px] px-[6px] pt-[2px] text-[10px] font-bold ${
                  tab === name ? 'bg-linear-to-b from-[#333] to-[#555] text-[#ffff40]' : 'bg-[#2b2b2b] text-white'
                }`}
              >
                {name}
              </button>
            ))}
          </div>
          <CampaignForm />
          <div className="mt-[13px]">
            <GridTools />
          </div>
          <div className="mt-2">
            <CampaignTable selected={selected} onSelect={setSelected} />
          </div>
        </main>
      </div>
      <ChatBubble />
      {showCookies && <CookieBar onClose={() => setShowCookies(false)} />}
    </div>
  );
};

export default App;
